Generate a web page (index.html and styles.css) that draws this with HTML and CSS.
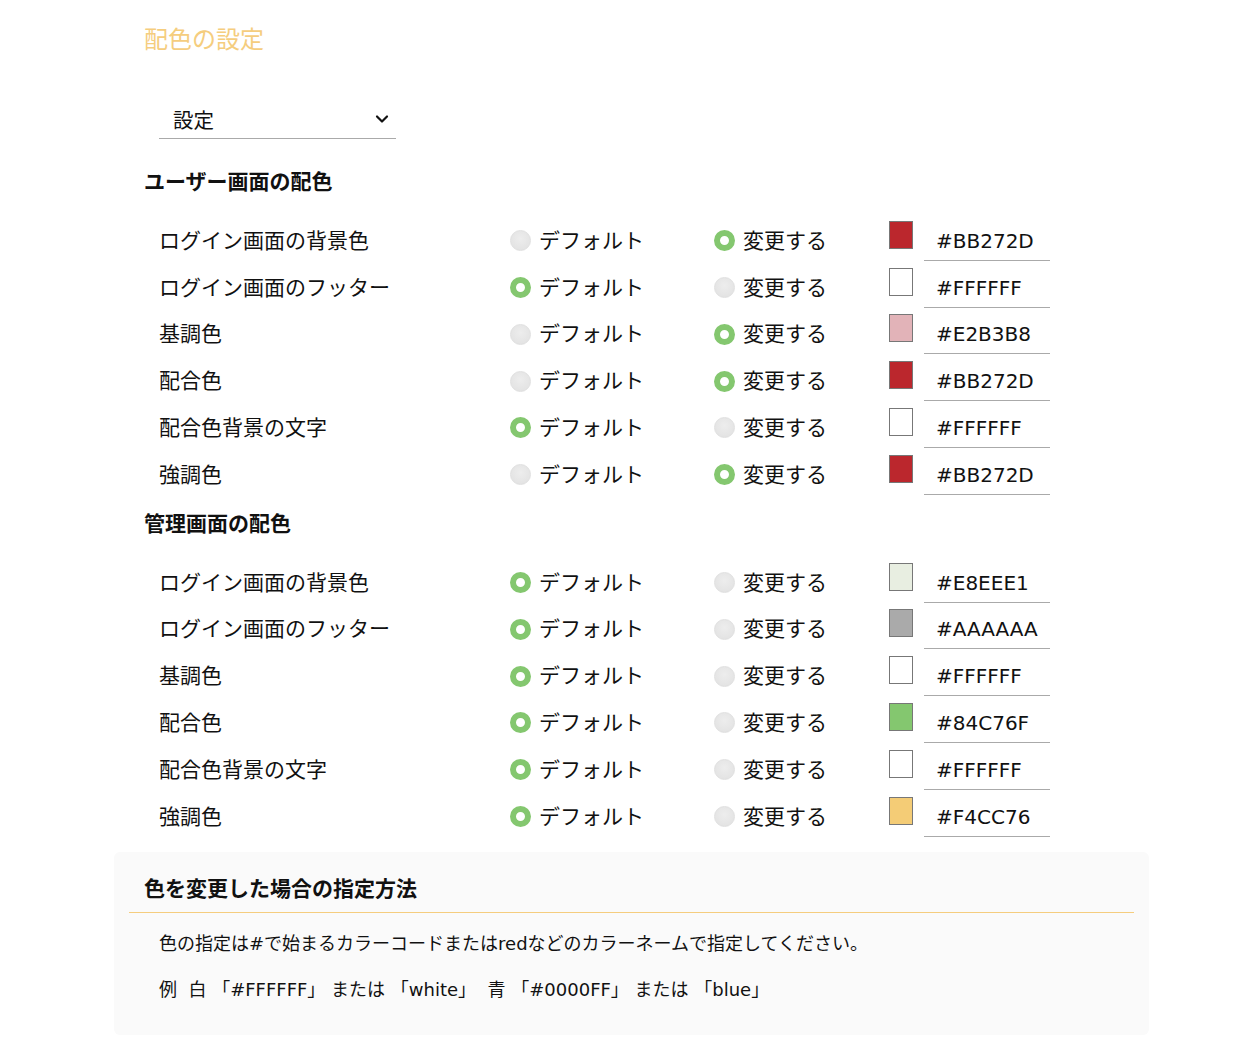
FILE: index.html
```html
<!DOCTYPE html>
<html lang="ja">
<head>
<meta charset="utf-8">
<title>配色の設定</title>
<link rel="stylesheet" href="styles.css">
</head>
<body>
<div class="page">
  <h1 class="title">配色の設定</h1>

  <div class="select">
    <span class="select-text">設定</span>
    <svg class="chevron" width="14" height="10" viewBox="0 0 14 10"><polyline points="2,2.5 7,7.5 12,2.5" fill="none" stroke="#111" stroke-width="2.2" stroke-linecap="round" stroke-linejoin="round"/></svg>
  </div>

  <h2 class="section">ユーザー画面の配色</h2>
  <div class="rows">
    <div class="row"><div class="label">ログイン画面の背景色</div><div class="opt"><span class="radio"></span>デフォルト</div><div class="opt"><span class="radio on"></span>変更する</div><div class="sw-cell"><span class="swatch" style="background:#BB272D"></span></div><div class="code">#BB272D</div></div>
    <div class="row"><div class="label">ログイン画面のフッター</div><div class="opt"><span class="radio on"></span>デフォルト</div><div class="opt"><span class="radio"></span>変更する</div><div class="sw-cell"><span class="swatch" style="background:#FFFFFF"></span></div><div class="code">#FFFFFF</div></div>
    <div class="row"><div class="label">基調色</div><div class="opt"><span class="radio"></span>デフォルト</div><div class="opt"><span class="radio on"></span>変更する</div><div class="sw-cell"><span class="swatch" style="background:#E2B3B8"></span></div><div class="code">#E2B3B8</div></div>
    <div class="row"><div class="label">配合色</div><div class="opt"><span class="radio"></span>デフォルト</div><div class="opt"><span class="radio on"></span>変更する</div><div class="sw-cell"><span class="swatch" style="background:#BB272D"></span></div><div class="code">#BB272D</div></div>
    <div class="row"><div class="label">配合色背景の文字</div><div class="opt"><span class="radio on"></span>デフォルト</div><div class="opt"><span class="radio"></span>変更する</div><div class="sw-cell"><span class="swatch" style="background:#FFFFFF"></span></div><div class="code">#FFFFFF</div></div>
    <div class="row"><div class="label">強調色</div><div class="opt"><span class="radio"></span>デフォルト</div><div class="opt"><span class="radio on"></span>変更する</div><div class="sw-cell"><span class="swatch" style="background:#BB272D"></span></div><div class="code">#BB272D</div></div>
  </div>

  <h2 class="section section-2">管理画面の配色</h2>
  <div class="rows">
    <div class="row"><div class="label">ログイン画面の背景色</div><div class="opt"><span class="radio on"></span>デフォルト</div><div class="opt"><span class="radio"></span>変更する</div><div class="sw-cell"><span class="swatch" style="background:#E8EEE1"></span></div><div class="code">#E8EEE1</div></div>
    <div class="row"><div class="label">ログイン画面のフッター</div><div class="opt"><span class="radio on"></span>デフォルト</div><div class="opt"><span class="radio"></span>変更する</div><div class="sw-cell"><span class="swatch" style="background:#AAAAAA"></span></div><div class="code">#AAAAAA</div></div>
    <div class="row"><div class="label">基調色</div><div class="opt"><span class="radio on"></span>デフォルト</div><div class="opt"><span class="radio"></span>変更する</div><div class="sw-cell"><span class="swatch" style="background:#FFFFFF"></span></div><div class="code">#FFFFFF</div></div>
    <div class="row"><div class="label">配合色</div><div class="opt"><span class="radio on"></span>デフォルト</div><div class="opt"><span class="radio"></span>変更する</div><div class="sw-cell"><span class="swatch" style="background:#84C76F"></span></div><div class="code">#84C76F</div></div>
    <div class="row"><div class="label">配合色背景の文字</div><div class="opt"><span class="radio on"></span>デフォルト</div><div class="opt"><span class="radio"></span>変更する</div><div class="sw-cell"><span class="swatch" style="background:#FFFFFF"></span></div><div class="code">#FFFFFF</div></div>
    <div class="row"><div class="label">強調色</div><div class="opt"><span class="radio on"></span>デフォルト</div><div class="opt"><span class="radio"></span>変更する</div><div class="sw-cell"><span class="swatch" style="background:#F4CC76"></span></div><div class="code">#F4CC76</div></div>
  </div>

  <div class="info">
    <h3 class="info-title">色を変更した場合の指定方法</h3>
    <p class="info-text">色の指定は#で始まるカラーコードまたはredなどのカラーネームで指定してください。</p>
    <p class="info-text">例&nbsp;&nbsp;白 「#FFFFFF」 または 「white」&nbsp;&nbsp;青 「#0000FF」 または 「blue」</p>
  </div>
</div>
</body>
</html>
```

FILE: styles.css
```css
* { box-sizing: border-box; }

html, body {
  margin: 0;
  padding: 0;
  background: #ffffff;
}

body {
  font-family: "DejaVu Sans", "Noto Sans CJK JP", sans-serif;
  color: #111111;
}

.page {
  width: 1035px;
  margin-left: 114px;
  padding-top: 24px;
}

.title {
  margin: 0 0 0 30px;
  font-size: 24px;
  line-height: 32px;
  font-weight: 400;
  color: #f5cd7e;
}

.select {
  margin: 44px 0 0 45px;
  width: 237px;
  height: 39px;
  border-bottom: 1px solid #aaaaaa;
  display: flex;
  align-items: center;
  justify-content: space-between;
  padding: 0 7px 0 14px;
}

.select-text {
  font-size: 20.5px;
  line-height: 38px;
  padding-top: 4px;
}

.chevron { display: block; }

.section {
  margin: 28px 0 17px 30px;
  font-size: 21px;
  line-height: 30px;
  font-weight: 700;
}

.section-2 {
  margin-top: 14px;
  margin-bottom: 17px;
}

.rows {
  padding-left: 45px;
}

.row {
  height: 46.8px;
  display: grid;
  grid-template-columns: 351px 204px 175px 35px 126px;
  align-items: end;
}

.label, .opt, .code {
  height: 40px;
  display: flex;
  align-items: center;
  font-size: 21px;
  white-space: nowrap;
}

.label, .opt {
  padding-bottom: 4px;
}

.opt { gap: 8px; }

.radio {
  width: 21px;
  height: 21px;
  border-radius: 50%;
  background: radial-gradient(circle at 50% 40%, #ededed 0%, #e4e4e4 70%, #dcdcdc 100%);
  border: 1px solid #e0e0e0;
  flex: none;
  position: relative;
  top: 2px;
}

.radio.on {
  background: #ffffff;
  border: 6.5px solid #84c76f;
}

.sw-cell {
  height: 40px;
}

.swatch {
  display: block;
  width: 24px;
  height: 28px;
  border: 1px solid #777777;
}

.code {
  padding-left: 12px;
  padding-top: 2px;
  border-bottom: 1px solid #aaaaaa;
  height: 41px;
  font-size: 20px;
}

.info {
  margin-top: 15px;
  background: #fafafa;
  border-radius: 6px;
  padding: 22px 15px 30px;
}

.info-title {
  margin: 0;
  padding: 0 15px 8px;
  font-size: 21px;
  line-height: 30px;
  font-weight: 700;
  border-bottom: 1px solid #f5cd7e;
}

.info-text {
  margin: 16px 0 0;
  padding-left: 30px;
  font-size: 18px;
  line-height: 30px;
}

.info-text + .info-text {
  margin-top: 16px;
}
```
